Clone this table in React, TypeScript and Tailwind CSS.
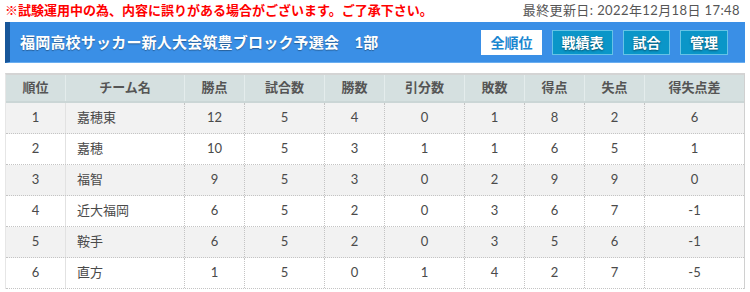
import React from "react";

const cols = [
  { label: "順位", w: 59 },
  { label: "チーム名", w: 119 },
  { label: "勝点", w: 60 },
  { label: "試合数", w: 80 },
  { label: "勝数", w: 60 },
  { label: "引分数", w: 80 },
  { label: "敗数", w: 60 },
  { label: "得点", w: 60 },
  { label: "失点", w: 60 },
  { label: "得失点差", w: 100 },
];

const rows: (string | number)[][] = [
  [1, "嘉穂東", 12, 5, 4, 0, 1, 8, 2, 6],
  [2, "嘉穂", 10, 5, 3, 1, 1, 6, 5, 1],
  [3, "福智", 9, 5, 3, 0, 2, 9, 9, 0],
  [4, "近大福岡", 6, 5, 2, 0, 3, 6, 7, -1],
  [5, "鞍手", 6, 5, 2, 0, 3, 5, 6, -1],
  [6, "直方", 1, 5, 0, 1, 4, 2, 7, -5],
];

const font = { fontFamily: 'Lato, "Noto Sans CJK JP", sans-serif' };

export default function App() {
  return (
    <div className="w-[750px] h-[292px] bg-white overflow-hidden" style={font}>
      <div className="flex items-center justify-between pl-[5px] pr-[10px] h-[21px]">
        <span className="text-[13px] font-bold text-[#ff0000] leading-none">
          ※試験運用中の為、内容に誤りがある場合がございます。ご了承下さい。
        </span>
        <span className="text-[13px] text-[#555] leading-none tracking-[0.4px]">最終更新日: 2022年12月18日 17:48</span>
      </div>
      <div className="mx-[5px] mt-[1px] h-[41px] flex items-center bg-[#3a8fe6] border-l-[5px] border-[#17569a] border-b border-b-[#6aaef0] pl-[10px] pr-[17px]">
        <span className="text-white font-bold text-[15px] tracking-[0.2px] [text-shadow:0_1px_1px_rgba(0,0,0,0.35)] flex-1">
          福岡高校サッカー新人大会筑豊ブロック予選会　1部
        </span>
        <div className="flex gap-[10px]">
          <span className="w-[61px] h-[25px] flex items-center justify-center bg-white text-[#1a86d0] font-bold text-[14px]">全順位</span>
          <span className="w-[61px] h-[25px] flex items-center justify-center bg-[#0a96c8] border border-[#66c3e6] text-white font-bold text-[14px] [text-shadow:0_1px_2px_rgba(0,0,0,0.5)]">戦績表</span>
          <span className="w-[47px] h-[25px] flex items-center justify-center bg-[#0a96c8] border border-[#66c3e6] text-white font-bold text-[14px] [text-shadow:0_1px_2px_rgba(0,0,0,0.5)]">試合</span>
          <span className="w-[48px] h-[25px] flex items-center justify-center bg-[#0a96c8] border border-[#66c3e6] text-white font-bold text-[14px] [text-shadow:0_1px_2px_rgba(0,0,0,0.5)]">管理</span>
        </div>
      </div>
      <div className="mx-[5px] mt-[10px] w-[740px] border-t-2 border-t-[#d4d4d4] border-r border-r-[#d0d0d0] border-l border-l-[#e6e6e6]">
        <div className="flex h-[28px] bg-[#d5e0e0] border-b-2 border-b-[#cbd6d6]">
          {cols.map((c, i) => (
            <div
              key={i}
              className={`flex items-center justify-center text-[13px] font-bold text-[#555] ${i > 0 ? "border-l border-l-[#e4ecec]" : ""}`}
              style={{ width: c.w }}
            >
              {c.label}
            </div>
          ))}
        </div>
        {rows.map((r, ri) => (
          <div
            key={ri}
            className={`flex h-[31px] border-b border-dotted border-b-[#c4c4c4] ${ri % 2 === 0 ? "bg-[#f2f2f2]" : "bg-white"}`}
          >
            {r.map((v, ci) => (
              <div
                key={ci}
                className={`flex items-center text-[13px] text-[#4a4a4a] ${ci === 1 ? "justify-start pl-[11px]" : "justify-center"} ${ci === 1 ? "border-l border-l-[#e2e2e2]" : ci > 1 ? "border-l border-dotted border-l-[#c4c4c4]" : ""}`}
                style={{ width: cols[ci].w }}
              >
                {typeof v === "number" && v < 0 ? `-${Math.abs(v)}` : v}
              </div>
            ))}
          </div>
        ))}
      </div>
    </div>
  );
}
